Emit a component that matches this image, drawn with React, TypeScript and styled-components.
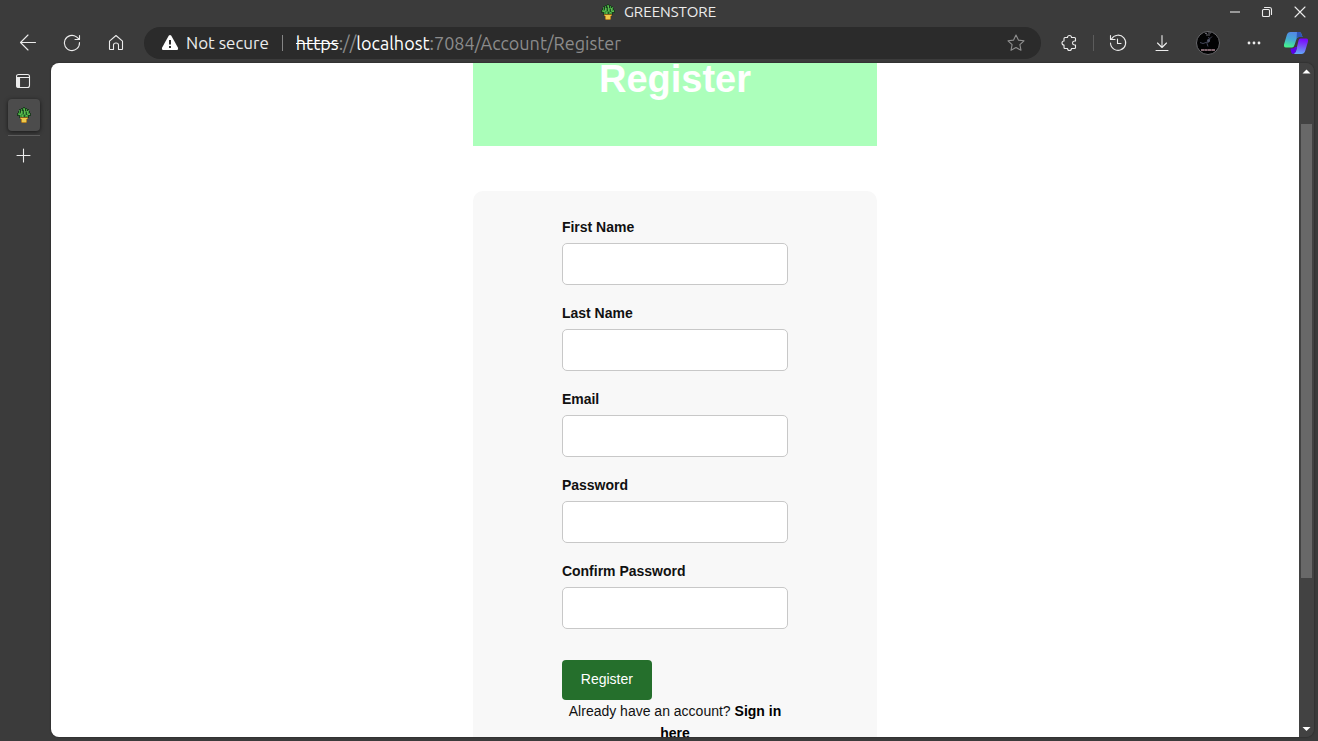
import React from 'react';
import styled, { createGlobalStyle, css } from 'styled-components';

const GlobalStyle = createGlobalStyle`
  *, *::before, *::after { box-sizing: border-box; }
  body {
    margin: 0;
    background: #3b3b3b;
    font-family: 'Liberation Sans', Arial, sans-serif;
  }
  button { font: inherit; color: inherit; border: 0; padding: 0; background: none; cursor: pointer; }
`;

const Window = styled.div`
  display: flex;
  flex-direction: column;
  height: 100vh;
  background: #3b3b3b;
  color: #ececec;
  font-family: Ubuntu, 'Open Sans', 'Noto Sans', sans-serif;
`;

const TitleBar = styled.header`
  display: grid;
  grid-template-columns: 1fr auto 1fr;
  align-items: center;
  flex: none;
  height: 23px;
  padding-right: 2px;
`;

const Title = styled.div`
  grid-column: 2;
  display: flex;
  align-items: center;
  gap: 8px;
  font-size: 15px;
  line-height: 22px;
`;

const WindowControls = styled.div`
  display: flex;
  justify-content: flex-end;
`;

const ControlButton = styled.button`
  display: grid;
  place-items: center;
  width: 32px;
  height: 22px;
  & + &:last-child { margin-left: 1px; }
`;

const Toolbar = styled.nav`
  display: flex;
  align-items: center;
  gap: 4px;
  flex: none;
  height: 40px;
  padding: 0 4px 0 8px;
`;

const ToolButton = styled.button<{ $width?: number }>`
  display: grid;
  place-items: center;
  flex: none;
  width: ${({ $width = 40 }) => $width}px;
  height: 32px;
`;

const AddressBar = styled.div`
  display: flex;
  align-items: center;
  flex: 1;
  min-width: 0;
  height: 32px;
  margin: 0 4px;
  padding: 0 5px 0 16px;
  border-radius: 16px;
  background: #2b2b2b;
  font-size: 17px;
  line-height: 24px;
  white-space: nowrap;
`;

const Security = styled.button`
  display: flex;
  align-items: center;
  gap: 6px;
`;

const Separator = styled.span<{ $space?: number }>`
  flex: none;
  width: 1px;
  height: 16px;
  margin: 0 ${({ $space = 0 }) => $space}px;
  background: ${({ $space }) => ($space ? '#858585' : '#5c5c5c')};
`;

const Url = styled.div`
  flex: 1;
  overflow: hidden;
  color: #8c8c8c;
  font-size: 18px;
  s, b { color: #fff; font-weight: 400; }
`;

const Body = styled.div`
  display: flex;
  flex: 1;
  min-height: 0;
  padding: 0 4px 4px 0;
`;

const Sidebar = styled.aside`
  display: flex;
  flex-direction: column;
  align-items: flex-start;
  flex: none;
  width: 51px;
  padding: 2px 8px;
`;

const SideButton = styled.button<{ $active?: boolean }>`
  display: grid;
  place-items: center;
  width: 32px;
  height: 32px;
  margin-bottom: 2px;
  border-radius: 4px;
  ${({ $active }) => $active && css`
    margin-bottom: 4px;
    background: #4c4c4c;
    box-shadow: 0 1px 4px rgba(0, 0, 0, 0.6);
  `}
`;

const SideRule = styled.hr`
  width: 32px;
  height: 1px;
  margin: 0 0 4px;
  border: 0;
  background: #5c5c5c;
`;

const Frame = styled.div`
  display: flex;
  flex: 1;
  min-width: 0;
  overflow: hidden;
  border-radius: 8px;
  box-shadow: 0 0 2px rgba(0, 0, 0, 0.5);
`;

const Page = styled.main`
  display: flex;
  flex-direction: column;
  align-items: center;
  flex: 1;
  min-width: 0;
  overflow: hidden;
  background: #fff;
  color: #111;
  font-family: 'Liberation Sans', Arial, sans-serif;
  font-size: 14px;
  line-height: 22px;
`;

const Column = styled.div`
  display: flex;
  flex-direction: column;
  flex: 1;
  width: calc(100% / 3);
  min-width: 300px;
  padding: 0 6px;
`;

const Banner = styled.h1`
  margin: 0 0 45px;
  padding-bottom: 51px;
  background: #acffbb;
  color: #fff;
  font-size: 38px;
  line-height: 32px;
  text-align: center;
`;

const Card = styled.form`
  flex: 1;
  padding: 25px 22% 24px;
  border-radius: 10px;
  background: #f8f8f8;
`;

const Field = styled.div`
  display: flex;
  flex-direction: column;
  gap: 5px;
  margin-bottom: 17px;
`;

const Label = styled.label`
  font-weight: 700;
`;

const TextInput = styled.input`
  width: 100%;
  height: 42px;
  padding: 8px 12px;
  border: 1px solid #c8c8c8;
  border-radius: 5px;
  background: #fff;
  font: inherit;
`;

const SubmitButton = styled.button`
  display: block;
  width: 90px;
  height: 40px;
  margin-top: 31px;
  padding-bottom: 2px;
  border-radius: 4px;
  background: #256f2c;
  color: #fff;
`;

const SignIn = styled.p`
  margin: 0;
  text-align: center;
  a { color: #000; font-weight: 700; text-decoration: none; }
`;

const ScrollTrack = styled.div`
  display: flex;
  flex-direction: column;
  align-items: center;
  flex: none;
  width: 15px;
  background: #424242;
`;

const ScrollArrow = styled.svg`
  flex: none;
  width: 15px;
  height: 16px;
`;

const ScrollRail = styled.div`
  flex: 1;
  width: 11px;
  padding-top: 45px;
`;

const ScrollThumb = styled.div`
  height: 76%;
  background: #686868;
`;

const Glyph = ({ children, size = 20, color = '#ececec' }: { children: React.ReactNode; size?: number; color?: string }) => (
  <svg width={size} height={size} viewBox={`0 0 ${size} ${size}`} fill="none" stroke={color} strokeWidth="1.1" strokeLinejoin="round" strokeLinecap="round" aria-hidden="true">
    {children}
  </svg>
);

const Plant = () => (
  <svg width="16" height="16" viewBox="0 0 16 16" aria-hidden="true">
    <path d="M7 0h2v1h2v1h2v2h1v2h1v3h-2v2H3V9H1V6h1V4h1V2h2V1h2z" fill="#1d3a20" />
    <path d="M7 1h2v3h1V2h1v3h1V3h1v3h1v2h-2v2H4V8H2V6h1V3h1v2h1V2h1v2h1z" fill="#3d963b" />
    <path d="M8 2h1v5H8zM5 4h1v3H5zM11 4h1v3h-1zM3 7h2v1H3zM12 7h2v1h-2zM6 8h1v2H6zM10 8h1v1h-1z" fill="#5fb84e" />
    <path d="M7 3h1v4H7zM4 5h1v1H4zM10 5h1v3h-1zM8 8h1v2H8z" fill="#1d5526" />
    <path d="M4 10h8v2h-1v3l-1 1H6l-1-1v-3H4z" fill="#b98220" />
    <path d="M5 11h6v1H5zM6 12h4v3H6z" fill="#ecca4c" />
    <path d="M4 10h8v1H4z" fill="#8a5f1c" />
  </svg>
);

const Avatar = () => (
  <svg width="24" height="24" viewBox="0 0 24 24" aria-hidden="true">
    <circle cx="12" cy="12" r="11.5" fill="#020203" stroke="#68686c" strokeWidth="1" />
    <path d="M9 2.5h2M12 2h3M10 4h4" stroke="#62626b" strokeWidth="1" />
    <path d="M12 6.500l2 1-1 3-2 2 1 3M14 7.500l2-2M13 10.500l-6 2-3-1" fill="none" stroke="#44475a" strokeWidth="1" />
    <circle cx="12.500" cy="9.500" r="1.500" fill="#55586c" />
    <path d="M5 19h14" stroke="#5d4850" strokeWidth="2" />
    <path d="M5 19h3M9 19h2M12 19h3M16 19h3" stroke="#a98791" strokeWidth="1" />
  </svg>
);

const Copilot = () => (
  <svg width="24" height="24" viewBox="0 0 24 24" aria-hidden="true">
    <defs>
      <linearGradient id="cpLeft" x1="0.6" y1="0" x2="0.3" y2="1">
        <stop offset="0" stopColor="#5585e8" />
        <stop offset="0.5" stopColor="#45a9d3" />
        <stop offset="1" stopColor="#45f58c" />
      </linearGradient>
      <linearGradient id="cpRight" x1="0.6" y1="0" x2="0.5" y2="1">
        <stop offset="0" stopColor="#7a00ff" />
        <stop offset="0.5" stopColor="#7651f5" />
        <stop offset="1" stopColor="#62a8fc" />
      </linearGradient>
    </defs>
    <path d="M6.500 1H15q2 0 2.500 2L18.500 6H15q-2 0-2.500 2l-2 6q-.8 2.500-2.500 2.500H2q-2.500 0-2-3L2.800 4Q3.700 1 6.500 1z" fill="url(#cpLeft)" />
    <path d="M13 1h2q2 0 2.500 2l1 3H15q-2 0-2.500 2z" fill="#2f55b8" />
    <path d="M16.500 7.500H22q2.500 0 2 3l-2.800 9.500q-1 3-3.700 3H9q2 0 3-3l2.500-10.500q.5-2 2-2z" fill="url(#cpRight)" />
    <path d="M6.500 17.500H8q2 0 3-1.500h2l-1 4q-1 3-3 3t-2.500-5.500z" fill="#5b00e8" />
  </svg>
);

const fields = [
  { id: 'firstName', label: 'First Name', type: 'text' },
  { id: 'lastName', label: 'Last Name', type: 'text' },
  { id: 'email', label: 'Email', type: 'email' },
  { id: 'password', label: 'Password', type: 'password' },
  { id: 'confirmPassword', label: 'Confirm Password', type: 'password' },
];

export default function App() {
  return (
    <>
      <GlobalStyle />
      <Window>
        <TitleBar>
          <Title><Plant />GREENSTORE</Title>
          <WindowControls>
            <ControlButton aria-label="Minimize">
              <Glyph size={12} color="#9a9a9a"><path d="M1 6h10" strokeWidth="2" strokeLinecap="butt" /></Glyph>
            </ControlButton>
            <ControlButton aria-label="Restore">
              <Glyph size={12}>
                <rect x="1.500" y="3.500" width="7" height="7" rx="1" />
                <path d="M3.500 1.500H8.500a2 2 0 0 1 2 2V8.500" />
              </Glyph>
            </ControlButton>
            <ControlButton aria-label="Close">
              <Glyph size={12}><path d="M1 1l10 10M11 1L1 11" /></Glyph>
            </ControlButton>
          </WindowControls>
        </TitleBar>

        <Toolbar>
          <ToolButton aria-label="Back">
            <Glyph><path d="M17.500 9.500H2.500M10 2L2.500 9.500 10 17" /></Glyph>
          </ToolButton>
          <ToolButton aria-label="Refresh">
            <Glyph><path d="M17.500 9.500A7.600 7.600 0 1 1 14.500 3.900L17.500 6.500M17.500 2.500V6.500H13" /></Glyph>
          </ToolButton>
          <ToolButton aria-label="Home">
            <Glyph><path d="M3.500 8.200L10 2.500l6.500 5.700V16q0 .5-.5.5h-3.500V12q0-2-2.500-2t-2.500 2v4.500H4q-.5 0-.5-.5z" /></Glyph>
          </ToolButton>
          <AddressBar>
            <Security>
              <svg width="20" height="20" viewBox="0 0 20 20" aria-hidden="true">
                <path d="M8.700 2.800q1.300-1.600 2.600 0l6.700 12q.7 2.200-1.200 2.200H3.200q-1.900 0-1.200-2.200z" fill="#fff" />
                <path d="M9 7h2v4.500H9zM9 13h2v2H9z" fill="#2b2b2b" />
              </svg>
              Not secure
            </Security>
            <Separator $space={13} />
            <Url role="textbox" aria-label="Address" tabIndex={0}>
              <s>https</s>://<b>localhost</b>:7084/Account/Register
            </Url>
            <ToolButton aria-label="Add to favorites">
              <Glyph color="#8f8f8f">
                <path d="M10 2l2.400 5.100 5.600.7-4.100 3.900 1.100 5.600L10 14.500l-5 2.800 1.100-5.600L2 7.800l5.600-.7z" />
              </Glyph>
            </ToolButton>
          </AddressBar>
          <ToolButton aria-label="Extensions">
            <Glyph>
              <path d="M6 4.500H8.500Q8.500 2.500 10.500 2.500T12.500 4.500H15.500q1 0 1 1V8H15.500Q13.500 8.200 13.500 10T15.500 12H16.500V14.500q0 1-1 1H12.500Q12.500 17.500 10.500 17.500T8.500 15.500H6q-1 0-1-1V12Q3 12 3 10T5 8V5.500q0-1 1-1z" />
            </Glyph>
          </ToolButton>
          <Separator />
          <ToolButton aria-label="History">
            <Glyph><path d="M3.500 6A7.600 7.600 0 1 1 2.500 10M2.500 2.500V6.500H7M9.500 6V10.500H13" /></Glyph>
          </ToolButton>
          <ToolButton aria-label="Downloads">
            <Glyph><path d="M10 2.500V14.500M5.500 10l4.500 4.500 4.500-4.500M4 17.500H16" /></Glyph>
          </ToolButton>
          <ToolButton $width={44} aria-label="Profile"><Avatar /></ToolButton>
          <ToolButton aria-label="Settings and more">
            <Glyph>
              <g fill="#ececec" stroke="none">
                <circle cx="5" cy="10" r="1.400" /><circle cx="10" cy="10" r="1.400" /><circle cx="15" cy="10" r="1.400" />
              </g>
            </Glyph>
          </ToolButton>
          <ToolButton $width={36} aria-label="Copilot"><Copilot /></ToolButton>
        </Toolbar>

        <Body>
          <Sidebar>
            <SideButton aria-label="Tab actions">
              <Glyph size={16}>
                <rect x="0.500" y="1.500" width="13" height="13" rx="2" />
                <path d="M1 4.500H13" />
                <path d="M1 4.500H3.500V14H2L1 13z" fill="#ececec" />
              </Glyph>
            </SideButton>
            <SideButton $active aria-label="GREENSTORE"><Plant /></SideButton>
            <SideRule />
            <SideButton aria-label="New tab">
              <Glyph size={16}><path d="M1 7.500H14M7.500 1V14" /></Glyph>
            </SideButton>
          </Sidebar>

          <Frame>
            <Page>
              <Column>
                <Banner>Register</Banner>
                <Card onSubmit={(e) => e.preventDefault()}>
                  {fields.map(({ id, label, type }) => (
                    <Field key={id}>
                      <Label htmlFor={id}>{label}</Label>
                      <TextInput id={id} name={id} type={type} />
                    </Field>
                  ))}
                  <SubmitButton type="submit">Register</SubmitButton>
                  <SignIn>
                    Already have an account? <a href="#login">Sign in here</a>
                  </SignIn>
                </Card>
              </Column>
            </Page>
            <ScrollTrack aria-hidden="true">
              <ScrollArrow viewBox="0 0 15 16"><path d="M3.500 10.500L7.500 6.500l4 4z" fill="#fff" /></ScrollArrow>
              <ScrollRail><ScrollThumb /></ScrollRail>
              <ScrollArrow viewBox="0 0 15 16"><path d="M3.500 6L7.500 10l4-4z" fill="#fff" /></ScrollArrow>
            </ScrollTrack>
          </Frame>
        </Body>
      </Window>
    </>
  );
}
